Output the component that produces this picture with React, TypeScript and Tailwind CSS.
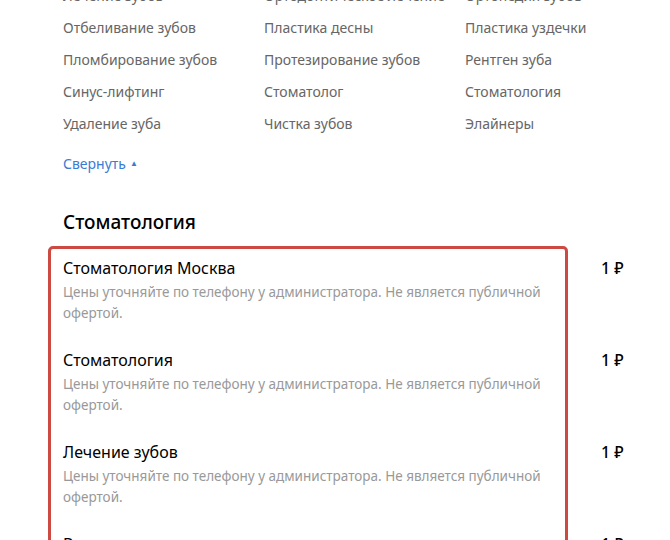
const links = [
    "Лечение зубов",
    "Ортодонтическое лечение",
    "Ортопедия зубов",
    "Отбеливание зубов",
    "Пластика десны",
    "Пластика уздечки",
    "Пломбирование зубов",
    "Протезирование зубов",
    "Рентген зуба",
    "Синус-лифтинг",
    "Стоматолог",
    "Стоматология",
    "Удаление зуба",
    "Чистка зубов",
    "Элайнеры",
];

const services = [
    "Стоматология Москва",
    "Стоматология",
    "Лечение зубов",
    "Виниры",
];

export default function App() {
    return (
        <div
            className="h-[540px] w-[670px] overflow-hidden bg-white"
            style={{ fontFamily: '"Noto Sans", "Open Sans", sans-serif' }}
        >
            <div className="mt-[-21px] grid grid-cols-[201px_201px_1fr] pl-[63px]">
                {links.map((l, i) => (
                    <a
                        key={i}
                        href="#"
                        className="flex h-8 items-center whitespace-nowrap text-[14px] text-[#666]"
                    >
                        {l}
                    </a>
                ))}
            </div>

            <a
                href="#"
                className="mt-[14px] flex h-5 items-center gap-1 pl-[63px] text-[14px] text-[#3a7bd5]"
            >
                Свернуть
                <span className="text-[8px]">▲</span>
            </a>

            <h2 className="mt-[35px] pl-[63px] text-[19px] font-medium leading-7 text-black">
                Стоматология
            </h2>

            <div className="mt-[10px] flex">
                <div className="ml-[48px] w-[520px] rounded-[5px] border-[3px] border-[#cc4a42]">
                    {services.map((s, i) => (
                        <div key={i} className="pb-[17px] pl-[12px] pr-[20px] pt-[7px]">
                            <div className="text-[16px] leading-6 text-black">{s}</div>
                            <p className="mt-[2px] text-[13.5px] leading-[21px] text-[#999]">
                                Цены уточняйте по телефону у администратора. Не является
                                публичной офертой.
                            </p>
                        </div>
                    ))}
                </div>
                <div className="ml-[33px] flex flex-col">
                    {services.map((_, i) => (
                        <div
                            key={i}
                            className="h-[92px] pt-[10px] text-[16px] font-medium leading-6 text-black"
                        >
                            1 ₽
                        </div>
                    ))}
                </div>
            </div>
        </div>
    );
}
